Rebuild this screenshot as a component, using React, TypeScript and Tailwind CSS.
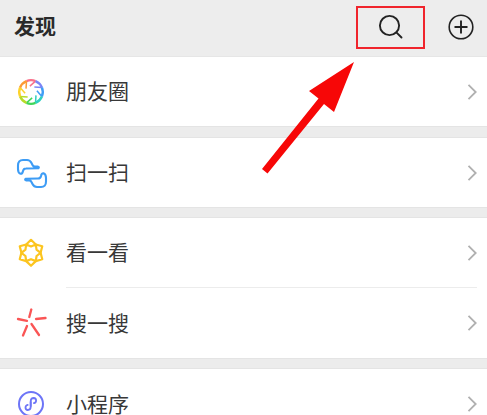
const font = { fontFamily: '"Noto Sans CJK SC", "Liberation Sans", sans-serif' };

function Chevron() {
  return (
    <svg width="10" height="16" viewBox="0 0 10 16" fill="none" className="shrink-0">
      <path d="M1.5 0.8 L8.7 8 L1.5 15.2" stroke="#b0b0b0" strokeWidth="1.8" />
    </svg>
  );
}

function Aperture() {
  const colors = ["#f9708a", "#7c86f6", "#3f9df5", "#2fd0c0", "#3fd65a", "#b7dc2a", "#fdd32a", "#fd9a35"];
  const cx = 19;
  const cy = 20;
  const R = 11.8;
  const r = 6;
  const p = (a: number, d: number) => `${(cx + d * Math.cos(a)).toFixed(2)} ${(cy + d * Math.sin(a)).toFixed(2)}`;
  return (
    <svg width="40" height="40" viewBox="0 0 40 40" fill="none" strokeWidth="2.4">
      {colors.map((c, i) => {
        const a0 = ((i * 45 - 112.5) * Math.PI) / 180;
        const a1 = ((i * 45 - 67.5) * Math.PI) / 180;
        return (
          <g key={c} stroke={c}>
            <path d={`M${p(a0, R)} A${R} ${R} 0 0 1 ${p(a1, R)}`} />
            <path d={`M${p(a1, R)} L${p(a0 + 0.2, r)}`} strokeWidth="1.5" />
          </g>
        );
      })}
    </svg>
  );
}

function Scan() {
  const d = "M6 12.5 Q6 7 11 7 L15 7 Q18 7 19.5 10 L20.5 12 Q21.2 13.6 23 13.6 L26 13.6 Q27.5 14.2 26.4 15.2 L14 15.5 Q11.5 15.5 11 18 Q10.5 21 8.5 20.8 Q6 20 6 16 Z";
  return (
    <svg width="40" height="40" viewBox="0 0 40 40" fill="none" stroke="#3d9cf5" strokeWidth="2.1" strokeLinejoin="round" strokeLinecap="round">
      <path d={d} />
      <path d={d} transform="rotate(180 20 20.5)" />
    </svg>
  );
}

function Star() {
  const ring = (tip: number, notch: number) => {
    const pts: string[] = [];
    for (let i = 0; i < 12; i++) {
      const a = ((i * 30 - 90) * Math.PI) / 180;
      const d = i % 2 === 0 ? tip : notch;
      pts.push(`${(19 + d * Math.cos(a)).toFixed(2)},${(19.8 + d * Math.sin(a)).toFixed(2)}`);
    }
    return pts.join(" ");
  };
  return (
    <svg width="40" height="40" viewBox="0 0 40 40" fill="none" stroke="#fcc520" strokeWidth="2.2" strokeLinejoin="round">
      <polygon points={ring(13, 9.6)} />
      <polygon points={ring(6.4, 9.6)} />
    </svg>
  );
}

function Spark() {
  return (
    <svg width="40" height="40" viewBox="0 0 40 40" fill="none" stroke="#fa5555" strokeWidth="2.3" strokeLinecap="round">
      <path d="M19.3 6.5 L17.3 14" />
      <path d="M24 16 L33.5 15" />
      <path d="M6 16 L15 17.8" />
      <path d="M15 23 L11 32.5" />
      <path d="M19.5 21 L27 32" />
    </svg>
  );
}

function Mini() {
  return (
    <svg width="40" height="40" viewBox="0 0 40 40" fill="none" stroke="#6d75f7" strokeWidth="2" strokeLinecap="round">
      <circle cx="19" cy="20" r="12" />
      <path d="M18.7 18 L18.7 23 Q18.5 26 15.9 26 Q13.5 25.8 13.5 23.4 Q13.6 21.2 15.7 20.8" strokeWidth="1.8" />
      <path d="M18.7 22 L18.7 17 Q18.9 14 21.7 14 Q24.1 14.2 24.1 16.6 Q24 18.8 21.9 19.2" strokeWidth="1.8" />
    </svg>
  );
}

function Row({ icon, label, divider, h }: { icon: React.ReactNode; label: string; divider?: boolean; h: string }) {
  return (
    <div className={`flex items-center bg-white pl-[12px] pr-[10px] ${h}`}>
      <div className="flex w-[54px] shrink-0 items-center">{icon}</div>
      <div className={`flex h-full flex-1 items-center justify-between ${divider ? "border-b border-[#ececec]" : ""}`}>
        <span className="pb-[2px] text-[21px] leading-none text-[#383838]">{label}</span>
        <Chevron />
      </div>
    </div>
  );
}

function Gap({ h }: { h: string }) {
  return <div className={`border-y border-[#e4e4e4] bg-[#ececec] ${h}`} />;
}

export default function App() {
  return (
    <div className="relative h-[415px] w-[487px] overflow-hidden bg-white" style={font}>
      <header className="flex h-[57px] items-center justify-between border-b border-[#e6e6e6] bg-[#ededed] pb-[2px] pl-[14px] pr-[13px]">
        <h1 className="pb-[4px] text-[21px] font-bold leading-none text-[#2a2a2a]">发现</h1>
        <div className="flex items-center gap-[44px]">
          <svg width="26" height="26" viewBox="0 0 26 26" fill="none" stroke="#222222" strokeWidth="1.9" strokeLinecap="round">
            <circle cx="11.5" cy="11.5" r="9.6" />
            <path d="M18.6 18.6 L23.5 23.5" />
          </svg>
          <svg width="26" height="26" viewBox="0 0 26 26" fill="none" stroke="#222222" strokeWidth="1.6">
            <circle cx="13" cy="13" r="11.8" />
            <path d="M13 6.5 V19.5 M6.5 13 H19.5" strokeWidth="1.9" />
          </svg>
        </div>
      </header>

      <Row h="h-[69px]" icon={<Aperture />} label="朋友圈" />
      <Gap h="h-[12px]" />
      <Row h="h-[69px]" icon={<Scan />} label="扫一扫" />
      <Gap h="h-[11px]" />
      <Row h="h-[70px]" icon={<Star />} label="看一看" divider />
      <Row h="h-[70px]" icon={<Spark />} label="搜一搜" />
      <Gap h="h-[11px]" />
      <Row h="h-[46px] pt-[24px]" icon={<Mini />} label="小程序" />

      <div className="absolute left-[356px] top-[6px] h-[43px] w-[69px] border-2 border-[#f0242c]" />
      <svg className="absolute left-0 top-0" width="487" height="415" viewBox="0 0 487 415">
        <path d="M354 62 L309 91 L318.5 98.5 L262 169 L267.5 173.5 L324 104 L334 112 Z" fill="#f70707" />
      </svg>
    </div>
  );
}
